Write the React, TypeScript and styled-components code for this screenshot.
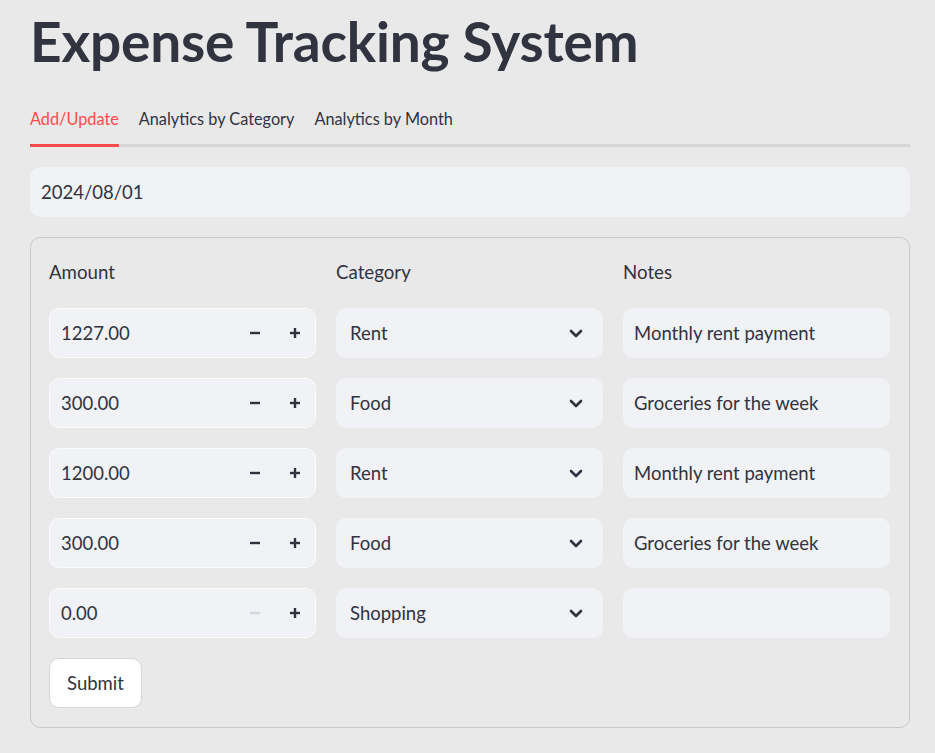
import * as React from 'react';
import styled, { createGlobalStyle } from 'styled-components';

const GlobalStyle = createGlobalStyle`
    body {
        margin: 0;
        background: #e9e9e9;
        font-family: Lato, "Open Sans", sans-serif;
        color: #31333f;
    }
`;

interface Expense {
    amount: string;
    category: string;
    notes: string;
}

const expenses: Expense[] = [
    { amount: '1227.00', category: 'Rent', notes: 'Monthly rent payment' },
    { amount: '300.00', category: 'Food', notes: 'Groceries for the week' },
    { amount: '1200.00', category: 'Rent', notes: 'Monthly rent payment' },
    { amount: '300.00', category: 'Food', notes: 'Groceries for the week' },
    { amount: '0.00', category: 'Shopping', notes: '' },
];

const tabs = ['Add/Update', 'Analytics by Category', 'Analytics by Month'];

const Chevron = () => (
    <svg width="14" height="9" viewBox="0 0 14 9">
        <path d="M2 2 L7 7 L12 2" fill="none" stroke="#31333f" strokeWidth="2.6" strokeLinecap="round" strokeLinejoin="round" />
    </svg>
);

const Minus = ({ disabled }: { disabled?: boolean }) => (
    <svg width="12" height="12" viewBox="0 0 12 12">
        <rect x="1" y="4.8" width="10" height="2.4" fill={disabled ? '#d4d7de' : '#31333f'} />
    </svg>
);

const Plus = () => (
    <svg width="12" height="12" viewBox="0 0 12 12">
        <rect x="1" y="4.8" width="10" height="2.4" fill="#31333f" />
        <rect x="4.8" y="1" width="2.4" height="10" fill="#31333f" />
    </svg>
);

export default function App() {
    const [active, setActive] = React.useState(0);

    return (
        <Page>
            <GlobalStyle />
            <Title>Expense Tracking System</Title>
            <TabList>
                {tabs.map((t, i) => (
                    <Tab key={t} active={i === active} onClick={() => setActive(i)}>{t}</Tab>
                ))}
            </TabList>
            <DateField>2024/08/01</DateField>
            <Form>
                <Grid>
                    <Label>Amount</Label>
                    <Label>Category</Label>
                    <Label>Notes</Label>
                    {expenses.map((e, i) => (
                        <React.Fragment key={i}>
                            <NumberField>
                                <FieldText>{e.amount}</FieldText>
                                <StepButton><Minus disabled={e.amount === '0.00'} /></StepButton>
                                <StepButton><Plus /></StepButton>
                            </NumberField>
                            <SelectField>
                                <FieldText>{e.category}</FieldText>
                                <Chevron />
                            </SelectField>
                            <TextField>{e.notes}</TextField>
                        </React.Fragment>
                    ))}
                </Grid>
                <SubmitButton>Submit</SubmitButton>
            </Form>
        </Page>
    );
}

const Page = styled.div`
    padding: 0 25px 0 30px;
`;

const Title = styled.h1`
    margin: 0;
    padding-top: 8px;
    font-size: 55px;
    font-weight: 700;
    line-height: 66px;
    letter-spacing: -0.2px;
`;

const TabList = styled.div`
    display: flex;
    gap: 20px;
    margin-top: 31px;
    border-bottom: 3px solid #d6d6d6;
`;

const Tab = styled.div<{ active: boolean }>`
    font-size: 16.3px;
    line-height: 28px;
    padding-bottom: 11px;
    margin-bottom: -3px;
    color: ${p => (p.active ? '#ff4b4b' : '#31333f')};
    border-bottom: 3px solid ${p => (p.active ? '#ff4b4b' : 'transparent')};
    cursor: pointer;
`;

const Field = styled.div`
    height: 50px;
    box-sizing: border-box;
    background: #f0f2f6;
    border-radius: 10px;
    font-size: 18.5px;
    display: flex;
    align-items: center;
`;

const DateField = styled(Field)`
    margin-top: 20px;
    padding-left: 11px;
`;

const Form = styled.div`
    margin-top: 20px;
    border: 1px solid #c9c9c9;
    border-radius: 10px;
    padding: 0 19px 19px 18px;
`;

const Grid = styled.div`
    display: grid;
    grid-template-columns: repeat(3, 1fr);
    column-gap: 20px;
    row-gap: 20px;
`;

const Label = styled.div`
    font-size: 18.7px;
    line-height: 24px;
    padding-top: 22px;
    margin-bottom: 4px;
`;

const FieldText = styled.span`
    flex: 1;
`;

const NumberField = styled(Field)`
    border: 1px solid #fbfbfc;
    padding-left: 11px;
`;

const StepButton = styled.div`
    width: 40px;
    height: 100%;
    display: flex;
    align-items: center;
    justify-content: center;
`;

const SelectField = styled(Field)`
    padding: 0 20px 0 14px;
`;

const TextField = styled(Field)`
    padding-left: 11px;
`;

const SubmitButton = styled.button`
    margin-top: 20px;
    width: 93px;
    height: 50px;
    padding: 0;
    background: #fff;
    border: 1px solid #d6d6d9;
    border-radius: 10px;
    font-family: inherit;
    font-size: 18.5px;
    color: #31333f;
`;
